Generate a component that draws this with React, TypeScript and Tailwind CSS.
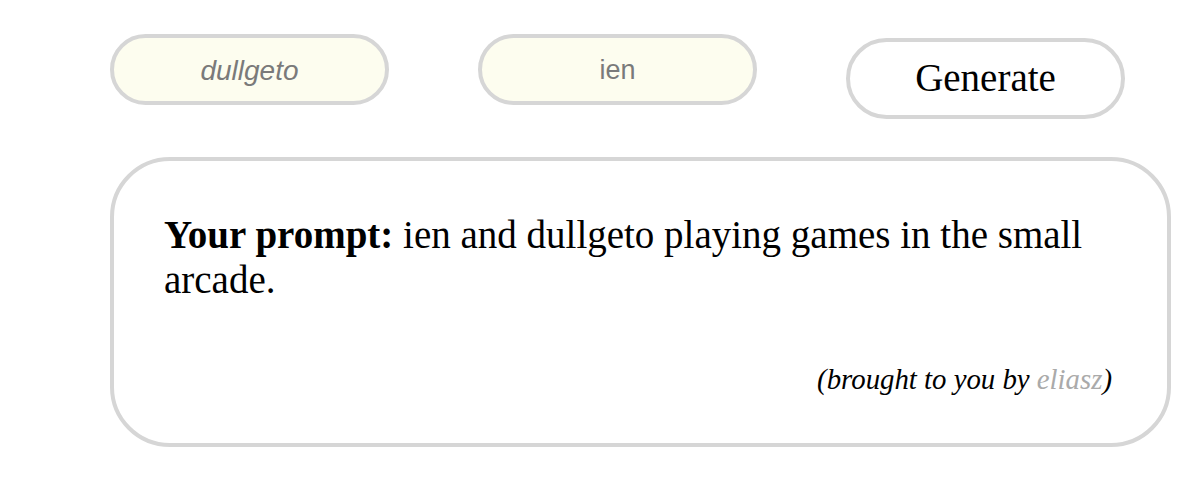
export default function App() {
  return (
    <div className="min-h-screen bg-white pl-[110px] pt-[34px]">
      <div className="flex items-start gap-[89px]">
        <div className="flex h-[71px] w-[279px] items-center justify-center rounded-full border-4 border-[#d6d6d6] bg-[#fdfdef] pt-[2px] font-['Liberation_Sans',sans-serif] text-[28px] italic text-[#7a7a7a]">
          dullgeto
        </div>
        <div className="flex h-[71px] w-[279px] items-center justify-center rounded-full border-4 border-[#d6d6d6] bg-[#fdfdef] pt-[2px] font-['Liberation_Sans',sans-serif] text-[27px] text-[#7a7a7a]">
          ien
        </div>
        <button className="mt-[4px] flex h-[81px] w-[279px] items-center justify-center rounded-full border-4 border-[#d6d6d6] bg-white font-['Liberation_Serif',serif] text-[39px] text-black">
          Generate
        </button>
      </div>

      <div className="mt-[38px] flex h-[290px] w-[1061px] flex-col rounded-[60px] border-4 border-[#d6d6d6] bg-white pl-[50px] pr-[55px] pt-[51px] font-['Liberation_Serif',serif]">
        <p className="text-[39px] leading-[45px] text-black">
          <span className="font-bold">Your prompt:</span> ien and dullgeto playing games in the small arcade.
        </p>
        <p className="mt-auto mb-[42px] text-right text-[28.8px] italic text-black">
          (brought to you by <span className="text-[#aaaaaa]">eliasz</span>)
        </p>
      </div>
    </div>
  )
}
